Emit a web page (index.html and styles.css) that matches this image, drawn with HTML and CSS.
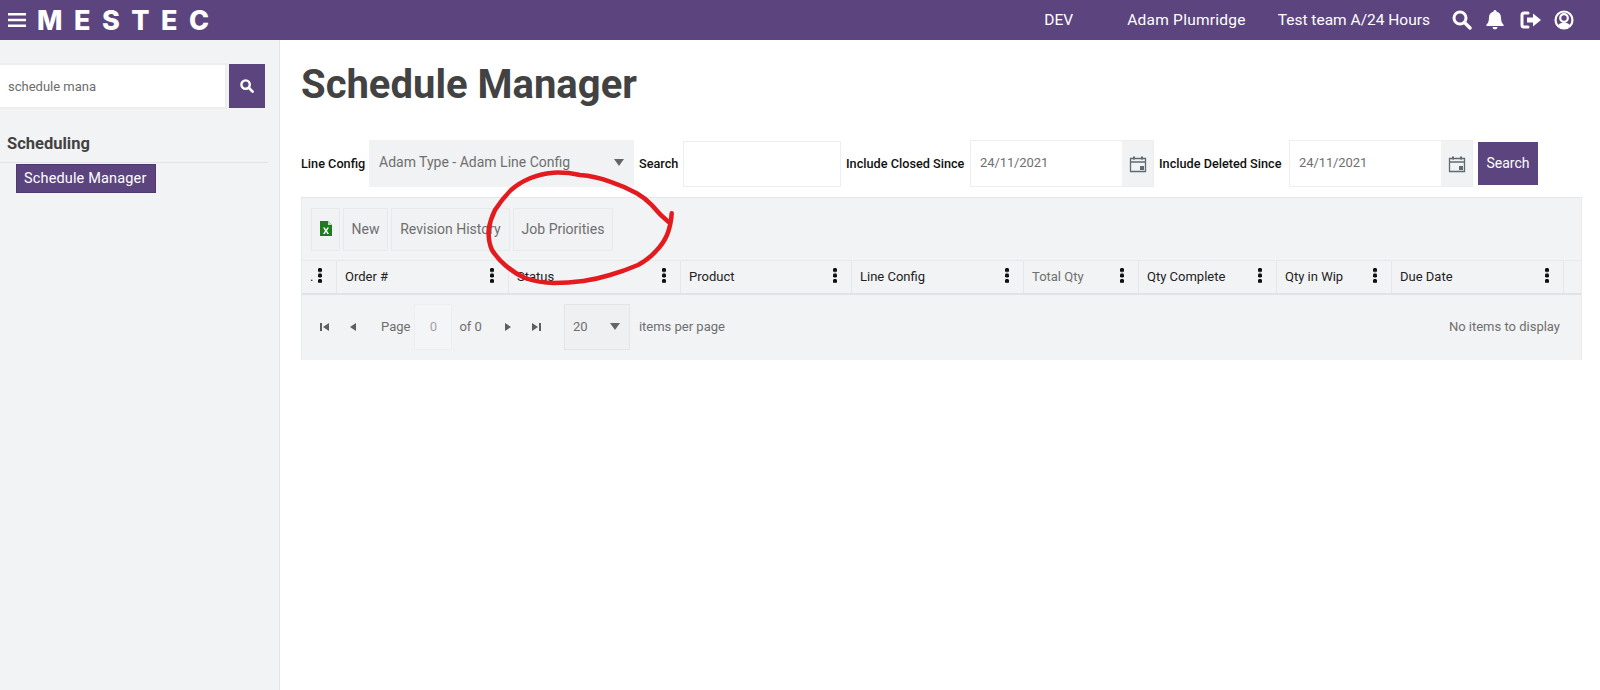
FILE: index.html
```html
<!DOCTYPE html>
<html lang="en">
<head>
<meta charset="utf-8">
<title>Schedule Manager</title>
<link rel="stylesheet" href="styles.css">
</head>
<body>
<header class="topbar">
  <div class="brand">
    <svg class="burger" width="18" height="14" viewBox="0 0 18 14"><path d="M0 0h18v2.600H0zM0 5.700h18v2.600H0zM0 11.400h18V14H0z" fill="#fff"/></svg>
    <span class="logo">MESTEC</span>
  </div>
  <div class="top-right">
    <span class="top-dev">DEV</span>
    <span class="top-user">Adam Plumridge</span>
    <span class="top-team">Test team A/24 Hours</span>
    <div class="top-icons">
      <svg width="20" height="20" viewBox="0 0 20 20"><circle cx="8" cy="8" r="6" fill="none" stroke="#fff" stroke-width="3"/><path d="M12.500 12.500L18 18" stroke="#fff" stroke-width="3.400" stroke-linecap="round"/></svg>
      <svg width="18" height="20" viewBox="0 0 18 20"><path d="M9 0a1.600 1.600 0 0 1 1.600 1.700C13.500 2.400 15 4.700 15 7.500c0 4 1 5.800 2.600 7.300.4.500.1 1.200-.6 1.200H1c-.7 0-1-.7-.6-1.200C2 13.300 3 11.500 3 7.500c0-2.800 1.500-5.100 4.400-5.800A1.600 1.600 0 0 1 9 0zM6.500 17h5a2.500 2.500 0 0 1-5 0z" fill="#fff"/></svg>
      <svg class="icon-door" width="21" height="18" viewBox="0 0 21 18"><path d="M8 2H4a2 2 0 0 0-2 2v10a2 2 0 0 0 2 2h4" fill="none" stroke="#fff" stroke-width="3" stroke-linecap="round"/><path d="M7 6.500h6V2.500L21 9l-8 6.500v-4H7z" fill="#fff"/></svg>
      <svg width="20" height="20" viewBox="0 0 20 20"><circle cx="10" cy="10" r="8.500" fill="none" stroke="#fff" stroke-width="2.200"/><circle cx="10" cy="8" r="3.800" fill="none" stroke="#fff" stroke-width="2.200"/><path d="M4 15.500c1.500-2.300 3.500-3 6-3s4.500.7 6 3l-2 2.500H6z" fill="#fff"/></svg>
    </div>
  </div>
</header>

<div class="layout">
  <aside class="sidebar">
    <form class="side-search">
      <div class="side-input">schedule mana</div>
      <button class="side-btn" type="button">
        <svg width="14" height="14" viewBox="0 0 20 20"><circle cx="8" cy="8" r="6" fill="none" stroke="#fff" stroke-width="3.400"/><path d="M12.500 12.500L18 18" stroke="#fff" stroke-width="3.800" stroke-linecap="round"/></svg>
      </button>
    </form>
    <h2 class="side-heading">Scheduling</h2>
    <a class="side-item">Schedule Manager</a>
  </aside>

  <main class="content">
    <h1 class="page-title">Schedule Manager</h1>

    <div class="filters">
      <label class="f-label f-line">Line Config</label>
      <div class="f-select"><span>Adam Type - Adam Line Config</span><i class="caret"></i></div>
      <label class="f-label f-search">Search</label>
      <div class="f-input"></div>
      <label class="f-label f-closed">Include Closed Since</label>
      <div class="f-date date-closed"><span>24/11/2021</span><b class="date-btn"><svg width="18" height="18" viewBox="0 0 18 18"><path d="M1.500 3.500h15v13h-15zM1.500 7h15" fill="none" stroke="#5f6b73" stroke-width="1.300"/><path d="M4 1.500h2v3H4zM12 1.500h2v3h-2zM11 11h4v4h-4z" fill="#5f6b73"/></svg></b></div>
      <label class="f-label f-deleted">Include Deleted Since</label>
      <div class="f-date date-deleted"><span>24/11/2021</span><b class="date-btn"><svg width="18" height="18" viewBox="0 0 18 18"><path d="M1.500 3.500h15v13h-15zM1.500 7h15" fill="none" stroke="#5f6b73" stroke-width="1.300"/><path d="M4 1.500h2v3H4zM12 1.500h2v3h-2zM11 11h4v4h-4z" fill="#5f6b73"/></svg></b></div>
      <button class="f-submit" type="button">Search</button>
    </div>

    <section class="grid">
      <div class="toolbar">
        <span class="tool tool-xl"><svg width="12" height="15" viewBox="0 0 12 15"><path d="M0 0h8l4 4v11H0z" fill="#1e7b1e"/><path d="M8 0l4 4H8z" fill="#bfe0bf"/><path d="M3 6.500h1.800L6 8.700l1.200-2.200H9L7 9.700l2 3.300H7.200L6 10.800 4.800 13H3l2-3.300z" fill="#fff"/></svg></span>
        <span class="tool tool-new">New</span>
        <span class="tool tool-rev">Revision History</span>
        <span class="tool tool-job">Job Priorities</span>
      </div>
      <div class="head">
        <div class="col c-0"><span>.</span><i class="dots"></i></div>
        <div class="col c-1"><span>Order #</span><i class="dots"></i></div>
        <div class="col c-2"><span>Status</span><i class="dots"></i></div>
        <div class="col c-3"><span>Product</span><i class="dots"></i></div>
        <div class="col c-4"><span>Line Config</span><i class="dots"></i></div>
        <div class="col c-5"><span class="muted">Total Qty</span><i class="dots"></i></div>
        <div class="col c-6"><span>Qty Complete</span><i class="dots"></i></div>
        <div class="col c-7"><span>Qty in Wip</span><i class="dots"></i></div>
        <div class="col c-8"><span>Due Date</span><i class="dots"></i></div>
      </div>
      <div class="pager">
        <svg class="p-first" width="10" height="10" viewBox="0 0 10 10"><path d="M0 1h2v8H0zM9 1v8L3 5z" fill="#5f5f5f"/></svg>
        <svg class="p-prev" width="8" height="10" viewBox="0 0 8 10"><path d="M7 1v8L1 5z" fill="#5f5f5f"/></svg>
        <span class="p-page">Page</span>
        <span class="p-num">0</span>
        <span class="p-of">of 0</span>
        <svg class="p-next" width="8" height="10" viewBox="0 0 8 10"><path d="M1 1v8l6-4z" fill="#5f5f5f"/></svg>
        <svg class="p-last" width="10" height="10" viewBox="0 0 10 10"><path d="M8 1h2v8H8zM1 1v8l6-4z" fill="#5f5f5f"/></svg>
        <div class="p-size"><span>20</span><i class="caret"></i></div>
        <span class="p-per">items per page</span>
        <span class="p-none">No items to display</span>
      </div>
    </section>
  </main>
</div>

<svg class="scribble" width="1600" height="690" viewBox="0 0 1600 690"><path d="M668.300 221.700Q660 215 651.700 205Q645 198 636.700 193.300Q623 186 610 181.700Q595 176 580 175Q566 172 553.300 172.700Q540 174 530 178.300Q519 183 511 190Q502 199 495 210Q490 220 488.700 230Q488 241 492 250Q497 258 505 265Q514 273 525 278Q539 283 554 283Q568 283 583.300 281Q597 279 610 275Q624 271 638 265Q649 259 656 251Q663 244 667 235Q671 225 671.700 213.300" fill="none" stroke="#e31b1f" stroke-width="4.500" stroke-linecap="round" stroke-linejoin="round"/></svg>
</body>
</html>
```
FILE: styles.css
```css
* { box-sizing: border-box; }
html, body { margin: 0; padding: 0; height: 690px; overflow: hidden; background: #fff; }
body { font-family: Roboto, "Noto Sans", sans-serif; font-size: 13px; color: #656565; position: relative; }

.topbar { height: 40px; background: #5c457e; color: #fff; display: flex; align-items: center; justify-content: space-between; padding: 0 26px 0 8px; }
.brand { display: flex; align-items: center; gap: 11px; }
.burger { display: block; }
.logo { font-family: Inter, "Open Sans", sans-serif; font-weight: 800; font-size: 27px; letter-spacing: 11.500px; line-height: 1; }
.top-right { display: flex; align-items: center; font-size: 15.500px; }
.top-dev { margin-right: 54px; }
.top-user { margin-right: 32px; letter-spacing: .25px; }
.top-team { margin-right: 22px; }
.top-icons { display: flex; align-items: center; gap: 14px; }
.top-icons svg { display: block; }
.top-icons .icon-door { margin: 0 -1px 0 2px; }

.layout { display: flex; height: 650px; }
.sidebar { width: 280px; flex: none; background: #f2f3f5; border-right: 1px solid #e4e5e8; padding-top: 23px; }
.side-search { display: flex; align-items: center; gap: 2px; }
.side-input { width: 227px; height: 46px; background: #fff; border: 2px solid #eceef0; border-left: 0; padding-left: 8px; display: flex; align-items: center; font-size: 13px; color: #6c6c6c; }
.side-btn { width: 36px; height: 44px; border: 0; padding: 0; background: #5c457e; display: flex; align-items: center; justify-content: center; }
.side-heading { margin: 24px 0 0; padding: 0 0 7px 7px; font-size: 16.500px; line-height: 22px; font-weight: 700; color: #424242; border-bottom: 1px solid #e3e4e7; width: 268px; }
.side-item { display: inline-block; margin: 1px 0 0 16px; width: 140px; height: 29px; line-height: 27px; padding-left: 7px; background: #5c457e; border: 1px solid #4e3a6c; color: #fff; font-size: 14.500px; letter-spacing: .15px; }

.content { flex: 1; min-width: 0; padding: 0 19px 0 21px; }
.page-title { margin: 18px 0 0; font-size: 40px; line-height: 54px; font-weight: 700; color: #424242; }

.filters { display: flex; align-items: center; height: 47px; margin-top: 28px; }
.f-label { font-size: 12.700px; font-weight: 500; color: #111; white-space: nowrap; padding-bottom: 1px; }
.f-line { width: 68px; }
.f-search { width: 44px; margin-left: 5px; }
.f-closed { width: 124px; margin-left: 5px; }
.f-deleted { width: 130px; margin-left: 5px; }
.f-select { width: 265px; height: 47px; background: #f1f2f4; display: flex; align-items: center; justify-content: space-between; padding: 0 10px 3px; color: #6f6f6f; font-size: 14px; }
.caret { width: 0; height: 0; border-left: 5px solid transparent; border-right: 5px solid transparent; border-top: 7px solid #666; display: block; }
.f-input { width: 158px; height: 46px; border: 1px solid #eceef0; background: #fff; }
.f-date { height: 47px; border: 1px solid #eceef0; display: flex; align-items: center; justify-content: space-between; padding-left: 9px; color: #6f6f6f; font-size: 13px; letter-spacing: -.1px; }
.f-date span { margin-bottom: 3px; }
.date-closed, .date-deleted { width: 184px; }
.date-btn { width: 31px; height: 45px; background: #f1f2f4; display: flex; align-items: center; justify-content: center; font-weight: 400; }
.f-submit { width: 60px; height: 43px; margin-left: 5px; border: 0; padding: 0 0 2px; background: #5c457e; color: #fff; font: inherit; font-size: 14px; }

.grid { margin-top: 10px; width: 1281px; height: 163px; background: #f2f3f5; border-top: 1px solid #e5e6e9; border-left: 1px solid #e9eaec; border-right: 1px solid #e9eaec; }
.toolbar { display: flex; height: 62px; padding: 10px 0 0 9px; gap: 3px; }
.tool { height: 43px; display: flex; align-items: center; justify-content: center; border: 1px solid #e8e9ec; background: #f1f2f4; font-size: 14px; color: #6f6f6f; padding-bottom: 2px; }
.tool-new { width: 45px; }
.tool-xl { width: 29px; }
.tool-rev { width: 119px; }
.tool-job { width: 100px; }
.head { display: flex; height: 35px; border-top: 1px solid #e8e9ec; border-bottom: 2px solid #e1e2e5; }
.col { display: flex; align-items: center; justify-content: space-between; padding: 0 14px 2px 8px; border-right: 1px solid #e6e7ea; color: #222; font-size: 13px; flex: none; }
.c-1 { width: 172px; }
.c-0 { width: 35px; }
.c-2 { width: 172px; }
.c-3 { width: 171px; }
.c-4 { width: 172px; }
.c-5 { width: 115px; }
.c-6 { width: 138px; }
.c-7 { width: 115px; }
.c-8 { width: 172px; }
.muted { color: #6f6f6f; }
.dots { display: block; width: 4px; height: 15px; background: radial-gradient(circle at 2px 2px, #111 2px, transparent 2.300px) 0 0 / 4px 5.500px; margin-top: -2px; }
.pager { display: flex; align-items: center; height: 65px; color: #6f6f6f; font-size: 13px; padding: 0 0 2px 18px; }
.pager svg { display: block; flex: none; }
.p-prev { margin-left: 19px; }
.p-page { margin-left: 24px; }
.p-num { width: 38px; height: 46px; margin-left: 4px; border: 1px solid #eceef0; display: flex; align-items: center; justify-content: center; color: #a5a5a5; background: #f4f5f6; }
.p-of { margin-left: 7px; }
.p-next { margin-left: 22px; }
.p-last { margin-left: 19px; }
.p-size { width: 66px; height: 46px; margin-left: 23px; border: 1px solid #e3e4e7; background: #eff0f2; display: flex; align-items: center; justify-content: space-between; padding: 0 9px 0 8px; }
.p-per { margin-left: 9px; }
.p-none { margin-left: auto; margin-right: 21px; }

.scribble { position: absolute; left: 0; top: 0; pointer-events: none; }
```
